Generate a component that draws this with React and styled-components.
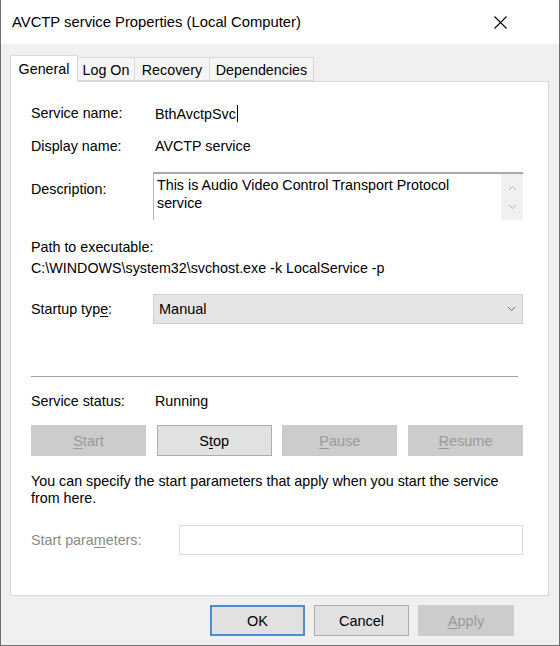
import React from "react";
import styled, { createGlobalStyle } from "styled-components";

const GlobalStyle = createGlobalStyle`
  html, body {
    margin: 0;
    padding: 0;
    background: #ffffff;
  }
  body {
    font-family: "Liberation Sans", Arial, sans-serif;
    font-size: 14.3px;
    color: #000;
  }
`

const Window = styled.div`
  width: 560px;
  height: 646px;
  box-sizing: border-box;
  border: 1px solid #707070;
  border-top: none;
  display: flex;
  flex-direction: column;
  background: #f0f0f0;
`

const TitleBar = styled.div`
  height: 44px;
  background: #ffffff;
  display: flex;
  align-items: center;
  justify-content: space-between;
  padding: 0 52px 0 11px;
  font-size: 14.8px;
  flex-shrink: 0;
`

const CloseIcon = styled.svg`
  width: 13px;
  height: 13px;
`

const Body = styled.div`
  flex: 1;
  padding: 10px 10px 0 9px;
  display: flex;
  flex-direction: column;
`

const TabRow = styled.div`
  display: flex;
  align-items: flex-end;
  height: 27px;
  position: relative;
  z-index: 1;
`

const Tab = styled.div`
  box-sizing: border-box;
  width: ${p => p.$w}px;
  height: ${p => (p.$active ? "27px" : "24px")};
  margin-bottom: ${p => (p.$active ? "-1px" : "0")};
  background: ${p => (p.$active ? "#ffffff" : "#f5f5f5")};
  border: 1px solid #d9d9d9;
  border-bottom: ${p => (p.$active ? "none" : "1px solid #d9d9d9")};
  border-left: ${p => (p.$first || p.$active ? "1px solid #d9d9d9" : "none")};
  display: flex;
  align-items: center;
  justify-content: center;
  font-size: 14.3px;
  padding-top: ${p => (p.$active ? "0" : "1px")};
`

const Panel = styled.div`
  box-sizing: border-box;
  height: 515px;
  background: #ffffff;
  border: 1px solid #d9d9d9;
  padding: 0 25px 0 20px;
  display: flex;
  flex-direction: column;
`

const Row = styled.div`
  display: flex;
  align-items: ${p => p.$align || "center"};
  height: ${p => p.$h}px;
  margin-top: ${p => p.$mt || 0}px;
`

const Label = styled.div`
  width: ${p => p.$w || 124}px;
  flex-shrink: 0;
  color: ${p => (p.$disabled ? "#8a8a8a" : "#000")};
  padding-top: ${p => p.$pt || 0}px;
`

const Value = styled.div`
  white-space: nowrap;
`

const Cursor = styled.span`
  display: inline-block;
  width: 1px;
  height: 17px;
  background: #000;
  vertical-align: -3px;
  margin-left: 1px;
`

const TextArea = styled.div`
  box-sizing: border-box;
  flex: 1;
  margin-left: -2px;
  height: 48px;
  border-top: 2px solid #a8a8a8;
  border-left: 1px solid #b8b8b8;
  display: flex;
  line-height: 18px;
`

const AreaText = styled.div`
  flex: 1;
  padding: 2px 0 0 3px;
`

const ScrollBar = styled.div`
  width: 22px;
  background: #f0f0f0;
  display: flex;
  flex-direction: column;
  align-items: center;
  justify-content: space-around;
  padding: 4px 0;
  box-sizing: border-box;
`

const Chevron = styled.svg`
  width: 9px;
  height: 6px;
`

const Select = styled.div`
  box-sizing: border-box;
  flex: 1;
  margin-left: -2px;
  height: 30px;
  background: #e5e5e5;
  border: 1px solid #d0d0d0;
  display: flex;
  align-items: center;
  justify-content: space-between;
  padding: 0 6px 0 5px;
  font-size: 14.5px;
`

const Separator = styled.div`
  height: 1px;
  background: #a0a0a0;
  margin: 52px 5px 0 0;
`

const ButtonRow = styled.div`
  display: flex;
  justify-content: space-between;
  gap: 10px;
  margin-top: ${p => p.$mt || 0}px;
`

const Button = styled.div`
  box-sizing: border-box;
  width: ${p => p.$w || 115}px;
  height: ${p => p.$h || 31}px;
  display: flex;
  align-items: center;
  justify-content: center;
  background: ${p => (p.$disabled ? "#cccccc" : "#e1e1e1")};
  border: ${p => (p.$default ? "2px solid #4d8ccf" : p.$disabled ? "1px solid #cccccc" : "1px solid #adadad")};
  color: ${p => (p.$disabled ? "#9a9a9a" : "#000")};
  font-size: 14.5px;
`

const Key = styled.span`
  text-decoration: underline;
  text-underline-offset: 2px;
`

const Note = styled.div`
  margin-top: 17px;
  line-height: 17px;
`

const Input = styled.div`
  box-sizing: border-box;
  flex: 1;
  height: 30px;
  border: 1px solid #d9d9d9;
`

const Footer = styled.div`
  display: flex;
  justify-content: flex-end;
  gap: 9px;
  margin-top: 9px;
  padding-right: 35px;
`

const ChevronDown = ({ color = "#b0b0b0" }) => (
  <Chevron viewBox="0 0 9 6">
    <path d="M1 1 L4.5 4.5 L8 1" fill="none" stroke={color} strokeWidth="1" />
  </Chevron>
)

const ChevronUp = ({ color = "#b0b0b0" }) => (
  <Chevron viewBox="0 0 9 6">
    <path d="M1 5 L4.5 1.5 L8 5" fill="none" stroke={color} strokeWidth="1" />
  </Chevron>
)

const App = () => {
  return (
    <>
      <GlobalStyle />
      <Window>
        <TitleBar>
          <span>AVCTP service Properties (Local Computer)</span>
          <CloseIcon viewBox="0 0 13 13">
            <path d="M0.5 0.5 L12.5 12.5 M12.5 0.5 L0.5 12.5" stroke="#000" strokeWidth="1.1" />
          </CloseIcon>
        </TitleBar>
        <Body>
          <TabRow>
            <Tab $w={68} $active $first>General</Tab>
            <Tab $w={57}>Log On</Tab>
            <Tab $w={75}>Recovery</Tab>
            <Tab $w={104}>Dependencies</Tab>
          </TabRow>
          <Panel>
            <Row $h={20} $mt={21}>
              <Label>Service name:</Label>
              <Value>BthAvctpSvc<Cursor /></Value>
            </Row>
            <Row $h={20} $mt={13}>
              <Label>Display name:</Label>
              <Value>AVCTP service</Value>
            </Row>
            <Row $h={48} $mt={16} $align="flex-start">
              <Label $pt={9}>Description:</Label>
              <TextArea>
                <AreaText>This is Audio Video Control Transport Protocol<br />service</AreaText>
                <ScrollBar>
                  <ChevronUp />
                  <ChevronDown />
                </ScrollBar>
              </TextArea>
            </Row>
            <Row $h={18} $mt={18}>
              <Label $w={300}>Path to executable:</Label>
            </Row>
            <Row $h={18} $mt={3}>
              <Value>C:\WINDOWS\system32\svchost.exe -k LocalService -p</Value>
            </Row>
            <Row $h={30} $mt={17}>
              <Label>Startup typ<Key>e</Key>:</Label>
              <Select>
                <span>Manual</span>
                <ChevronDown color="#707070" />
              </Select>
            </Row>
            <Separator />
            <Row $h={20} $mt={14}>
              <Label>Service status:</Label>
              <Value>Running</Value>
            </Row>
            <ButtonRow $mt={14}>
              <Button $disabled><Key>S</Key>tart</Button>
              <Button>S<Key>t</Key>op</Button>
              <Button $disabled><Key>P</Key>ause</Button>
              <Button $disabled><Key>R</Key>esume</Button>
            </ButtonRow>
            <Note>
              You can specify the start parameters that apply when you start the service<br />
              from here.
            </Note>
            <Row $h={30} $mt={18}>
              <Label $w={148} $disabled>Start para<Key>m</Key>eters:</Label>
              <Input />
            </Row>
          </Panel>
          <Footer>
            <Button $w={95} $h={31} $default>OK</Button>
            <Button $w={95} $h={31}>Cancel</Button>
            <Button $w={96} $h={31} $disabled><Key>A</Key>pply</Button>
          </Footer>
        </Body>
      </Window>
    </>
  )
}

export default App;
